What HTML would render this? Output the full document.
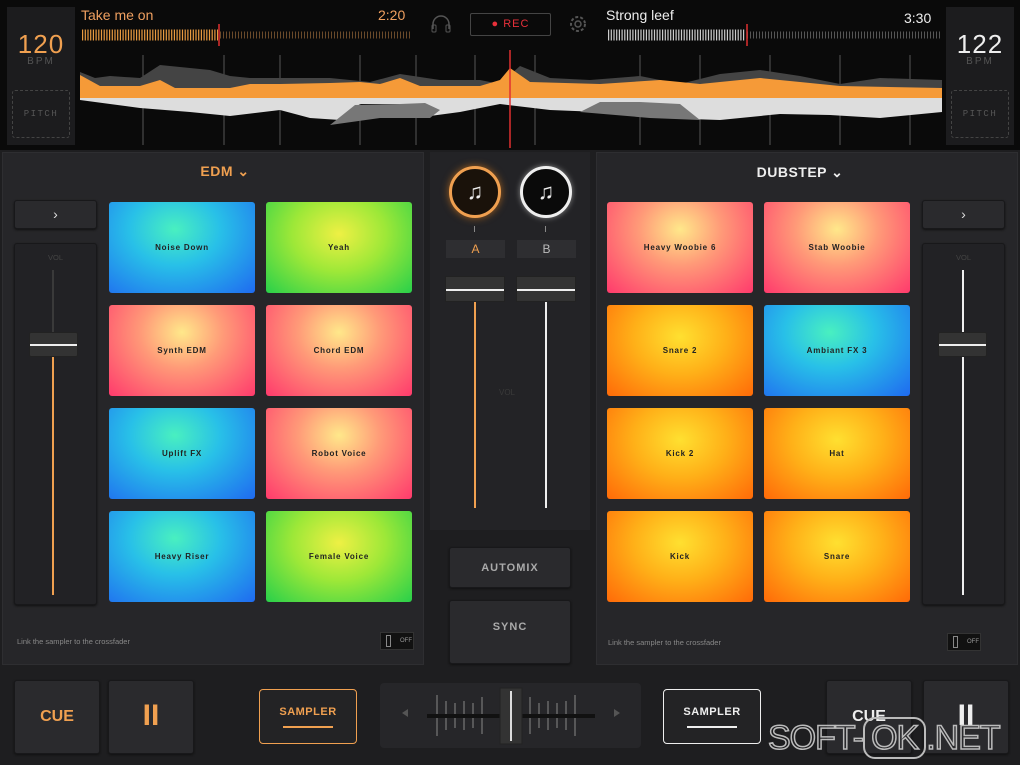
<!DOCTYPE html>
<html><head><meta charset="utf-8"><style>
*{margin:0;padding:0;box-sizing:border-box}
body{width:1020px;height:765px;background:#1e1e20;font-family:"Liberation Sans",sans-serif;position:relative;overflow:hidden;color:#ddd}
.a{position:absolute}
.panel{background:#262629;border:1px solid #2e2e31}
.btn{background:#2a2a2d;border:1px solid #18181a;border-radius:3px;box-shadow:0 1px 2px #111}
.pad{position:absolute;width:146px;height:91px;border-radius:3px;font-size:8px;font-weight:bold;letter-spacing:.8px;color:#222;display:flex;align-items:center;justify-content:center}
.blue{background:radial-gradient(ellipse at 45% 30%,#49f0c0 0%,#28c0e8 40%,#1f6af0 100%)}
.green{background:radial-gradient(ellipse at 50% 35%,#eef044 0%,#9ee838 45%,#28d04a 100%)}
.pink{background:radial-gradient(ellipse at 50% 30%,#ffe88a 0%,#ff9a78 40%,#ff3a6c 100%)}
.orange{background:radial-gradient(ellipse at 50% 35%,#ffe030 0%,#ffb018 45%,#ff6a08 100%)}
.hdr{font-size:14px;font-weight:bold;letter-spacing:.5px}
.small{font-size:7.5px;color:#888}
</style></head><body>
<div class="a" style="left:0;top:0;width:1020px;height:150px;background:#0a0a0a"></div>
<div class="a" style="top:7px;left:7px;width:68px;height:138px;background:#1c1c1e"></div>
<div class="a" style="left:7px;top:29px;width:68px;text-align:center;color:#f0a050;font-size:26px;letter-spacing:1px">120</div>
<div class="a" style="left:7px;top:56px;width:68px;text-align:center;color:#555;font-size:10px;letter-spacing:2px">BPM</div>
<div class="a" style="left:12px;top:90px;width:58px;height:48px;border:1px dashed #444;border-radius:3px;color:#555;font-size:9px;letter-spacing:1.5px;text-align:center;line-height:46px;font-family:'Liberation Mono',monospace">PITCH</div>
<div class="a" style="left:946px;top:7px;width:68px;height:138px;background:#1c1c1e"></div>
<div class="a" style="left:946px;top:29px;width:68px;text-align:center;color:#eee;font-size:26px;letter-spacing:1px">122</div>
<div class="a" style="left:946px;top:56px;width:68px;text-align:center;color:#555;font-size:10px;letter-spacing:2px">BPM</div>
<div class="a" style="left:951px;top:90px;width:58px;height:48px;border:1px dashed #444;border-radius:3px;color:#555;font-size:9px;letter-spacing:1.5px;text-align:center;line-height:46px;font-family:'Liberation Mono',monospace">PITCH</div>
<div class="a" style="left:81px;top:7px;color:#f0a060;font-size:14px">Take me on</div>
<div class="a" style="left:378px;top:7px;color:#f0a060;font-size:14px">2:20</div>
<div class="a" style="left:606px;top:7px;color:#eee;font-size:14px">Strong leef</div>
<div class="a" style="left:904px;top:10px;color:#eee;font-size:14px">3:30</div>
<div class="a" style="left:470px;top:13px;width:81px;height:23px;border:1px solid #444;border-radius:2px;color:#e8303a;font-size:11px;text-align:center;line-height:21px;letter-spacing:1px">● REC</div>
<svg class="a" style="left:430px;top:14px" width="22" height="20"><path d="M3 15 V10 a8 8 0 0 1 16 0 V15" fill="none" stroke="#555" stroke-width="1.5"/><rect x="2" y="11" width="4" height="7" rx="1" fill="none" stroke="#555"/><rect x="16" y="11" width="4" height="7" rx="1" fill="none" stroke="#555"/></svg>
<svg class="a" style="left:568px;top:14px" width="20" height="20"><circle cx="10" cy="10" r="7" fill="none" stroke="#555" stroke-width="2" stroke-dasharray="3 2"/><circle cx="10" cy="10" r="3" fill="none" stroke="#555" stroke-width="1.5"/></svg>
<svg class="a" style="left:80px;top:0" width="862" height="148">
<path d="M2 35 H138" stroke="#e89a40" stroke-width="11" stroke-dasharray="1.2 1.5"/>
<path d="M140 35 H330" stroke="#6a4a2a" stroke-width="7" stroke-dasharray="1 2"/>
<line x1="139" y1="24" x2="139" y2="46" stroke="#e03030" stroke-width="1.5"/>
<path d="M528 35 H665" stroke="#ccc" stroke-width="11" stroke-dasharray="1.2 1.5"/>
<path d="M667 35 H860" stroke="#555" stroke-width="7" stroke-dasharray="1 2"/>
<line x1="667" y1="24" x2="667" y2="46" stroke="#e03030" stroke-width="1.5"/>
<g stroke="#555" stroke-width="1">
<path d="M63 55V145M144 55V145M200 55V145M280 55V145M336 55V145M395 55V145M455 55V145M560 55V145M620 55V145M690 55V145M760 55V145M830 55V145"/>
</g>
<path d="M0 72 L15 78 30 76 60 78 80 65 110 68 130 70 150 76 170 78 200 78 250 78 290 82 320 74 360 80 400 80 420 84 440 66 470 78 510 80 560 76 600 84 640 74 680 70 720 76 760 84 800 78 862 80 V98 H0Z" fill="#444"/>
<path d="M0 75 L20 86 60 86 80 80 95 88 150 88 170 84 200 84 250 83 280 82 300 84 320 78 340 86 400 86 420 80 430 68 450 82 520 84 580 80 620 84 680 78 720 82 760 86 862 88 V98 H0Z" fill="#f59a38"/>
<path d="M0 98 H862 V112 L800 118 750 115 700 114 640 120 580 118 520 112 470 110 420 104 380 112 350 116 320 104 280 104 260 120 230 118 200 110 150 116 110 112 60 108 30 104 0 100Z" fill="#ddd"/>
<path d="M250 125 L275 105 320 104 345 103 360 110 350 118 300 118Z M500 112 L520 102 560 102 600 104 620 120 570 118Z" fill="#777"/>
<line x1="430" y1="50" x2="430" y2="148" stroke="#e03030" stroke-width="1.5"/>
</svg>
<div class="a panel" style="left:2px;top:152px;width:422px;height:513px"></div>
<div class="a hdr" style="left:180px;top:163px;width:90px;text-align:center;color:#f0a050">EDM ⌄</div>
<div class="a btn" style="left:14px;top:200px;width:83px;height:29px;text-align:center;line-height:27px;color:#ddd;font-size:14px">›</div>
<div class="a btn" style="left:14px;top:243px;width:83px;height:362px;background:#222225"></div>
<div class="a small" style="left:14px;top:253px;width:83px;text-align:center;color:#444">VOL</div>
<div class="a" style="left:52px;top:270px;width:2px;height:325px;background:#3a3a3a"></div>
<div class="a" style="left:52px;top:350px;width:2px;height:245px;background:#f0a050"></div>
<div class="a" style="left:29px;top:332px;width:49px;height:25px;background:#333;border:1px solid #222;border-radius:2px"><div style="margin-top:11px;height:2px;background:#eee"></div></div>
<div class="pad blue" style="left:109px;top:202px">Noise Down</div>
<div class="pad green" style="left:266px;top:202px">Yeah</div>
<div class="pad pink" style="left:109px;top:305px">Synth EDM</div>
<div class="pad pink" style="left:266px;top:305px">Chord EDM</div>
<div class="pad blue" style="left:109px;top:408px">Uplift FX</div>
<div class="pad pink" style="left:266px;top:408px">Robot Voice</div>
<div class="pad blue" style="left:109px;top:511px">Heavy Riser</div>
<div class="pad green" style="left:266px;top:511px">Female Voice</div>
<div class="a small" style="left:17px;top:637px">Link the sampler to the crossfader</div>
<div class="a" style="left:380px;top:632px;width:34px;height:18px;background:#111;border:1px solid #333;font-size:6px;color:#999;line-height:16px;padding-left:19px">OFF<div style="position:absolute;left:5px;top:2px;width:5px;height:12px;border:1px solid #888"></div></div>
<div class="a" style="left:430px;top:152px;width:160px;height:378px;background:#232326"></div>
<div class="a" style="left:449px;top:166px;width:52px;height:52px;border-radius:50%;border:3px solid #f0a050;background:#1a120a;box-shadow:0 0 8px #a06020;color:#eee;font-size:22px;text-align:center;line-height:46px">♫</div>
<div class="a" style="left:520px;top:166px;width:52px;height:52px;border-radius:50%;border:3px solid #eee;background:#0a0a0a;box-shadow:0 0 6px #888;color:#eee;font-size:22px;text-align:center;line-height:46px">♫</div>
<div class="a" style="left:474px;top:226px;width:1px;height:6px;background:#888"></div>
<div class="a" style="left:545px;top:226px;width:1px;height:6px;background:#888"></div>
<div class="a" style="left:446px;top:240px;width:59px;height:18px;background:#2e2e31;color:#f0a050;font-size:12px;text-align:center;line-height:18px">A</div>
<div class="a" style="left:517px;top:240px;width:59px;height:18px;background:#2e2e31;color:#bbb;font-size:12px;text-align:center;line-height:18px">B</div>
<div class="a" style="left:474px;top:300px;width:2px;height:208px;background:#f0a050"></div>
<div class="a" style="left:545px;top:300px;width:2px;height:208px;background:#eee"></div>
<div class="a" style="left:499px;top:388px;color:#3a3a3a;font-size:8px">VOL</div>
<div class="a" style="left:445px;top:276px;width:60px;height:26px;background:#333;border:1px solid #222"><div style="margin-top:12px;height:2px;background:#eee"></div></div>
<div class="a" style="left:516px;top:276px;width:60px;height:26px;background:#333;border:1px solid #222"><div style="margin-top:12px;height:2px;background:#eee"></div></div>
<div class="a btn" style="left:449px;top:547px;width:122px;height:41px;text-align:center;line-height:40px;font-size:11px;font-weight:bold;letter-spacing:1px;color:#aaa">AUTOMIX</div>
<div class="a btn" style="left:449px;top:600px;width:122px;height:64px;text-align:center;padding-top:20px;font-size:11px;font-weight:bold;letter-spacing:1px;color:#aaa">SYNC</div>
<div class="a panel" style="left:596px;top:152px;width:422px;height:513px"></div>
<div class="a hdr" style="left:740px;top:164px;width:120px;text-align:center;color:#eee">DUBSTEP ⌄</div>
<div class="a btn" style="left:922px;top:200px;width:83px;height:29px;text-align:center;line-height:27px;color:#ddd;font-size:14px">›</div>
<div class="a btn" style="left:922px;top:243px;width:83px;height:362px;background:#222225"></div>
<div class="a small" style="left:922px;top:253px;width:83px;text-align:center;color:#444">VOL</div>
<div class="a" style="left:962px;top:270px;width:2px;height:325px;background:#eee"></div>
<div class="a" style="left:938px;top:332px;width:49px;height:25px;background:#333;border:1px solid #222;border-radius:2px"><div style="margin-top:11px;height:2px;background:#eee"></div></div>
<div class="pad pink" style="left:607px;top:202px">Heavy Woobie 6</div>
<div class="pad pink" style="left:764px;top:202px">Stab Woobie</div>
<div class="pad orange" style="left:607px;top:305px">Snare 2</div>
<div class="pad blue" style="left:764px;top:305px">Ambiant FX 3</div>
<div class="pad orange" style="left:607px;top:408px">Kick 2</div>
<div class="pad orange" style="left:764px;top:408px">Hat</div>
<div class="pad orange" style="left:607px;top:511px">Kick</div>
<div class="pad orange" style="left:764px;top:511px">Snare</div>
<div class="a small" style="left:608px;top:638px">Link the sampler to the crossfader</div>
<div class="a" style="left:947px;top:633px;width:34px;height:18px;background:#111;border:1px solid #333;font-size:6px;color:#999;line-height:16px;padding-left:19px">OFF<div style="position:absolute;left:5px;top:2px;width:5px;height:12px;border:1px solid #888"></div></div>
<div class="a btn" style="left:14px;top:680px;width:86px;height:74px;color:#f0a050;font-size:16px;font-weight:bold;text-align:center;line-height:72px">CUE</div>
<div class="a btn" style="left:108px;top:680px;width:86px;height:74px;color:#f0a050;font-size:30px;font-weight:bold;text-align:center;line-height:70px">II</div>
<div class="a" style="left:259px;top:689px;width:98px;height:55px;border:1.5px solid #f0a050;border-radius:4px;background:#232325;color:#f0a050;font-size:11px;font-weight:bold;letter-spacing:.5px;text-align:center;padding-top:16px">SAMPLER<div style="margin:8px auto 0;width:50px;height:2px;background:#f0a050"></div></div>
<div class="a" style="left:663px;top:689px;width:98px;height:55px;border:1.5px solid #eee;border-radius:4px;background:#232325;color:#eee;font-size:11px;font-weight:bold;letter-spacing:.5px;text-align:center;padding-top:16px">SAMPLER<div style="margin:8px auto 0;width:50px;height:2px;background:#eee"></div></div>
<div class="a" style="left:380px;top:683px;width:261px;height:65px;background:#262629;border-radius:4px"></div>
<svg class="a" style="left:380px;top:683px" width="261" height="65">
<path d="M22 30 l6 -4 v8z M240 30 l-6 -4 v8z" fill="#555"/>
<g stroke="#888"><path d="M57 12V53M66 18V47M75 20V45M84 18V47M93 20V45M102 14V51M150 14V51M159 20V45M168 18V47M177 20V45M186 18V47M195 12V53"/></g>
<line x1="47" y1="33" x2="215" y2="33" stroke="#111" stroke-width="4"/>
<rect x="120" y="5" width="22" height="56" fill="#333" stroke="#222"/>
<line x1="131" y1="8" x2="131" y2="58" stroke="#ddd" stroke-width="2"/>
</svg>
<div class="a btn" style="left:826px;top:680px;width:86px;height:74px;color:#eee;font-size:16px;font-weight:bold;text-align:center;line-height:72px">CUE</div>
<div class="a btn" style="left:923px;top:680px;width:86px;height:74px;color:#eee;font-size:30px;font-weight:bold;text-align:center;line-height:70px">II</div>
<div class="a" style="left:768px;top:719px;font-size:34px;color:transparent;-webkit-text-stroke:1.5px #bbb;letter-spacing:-1px">SOFT-<span style="border:2px solid #bbb;border-radius:12px;padding:0 6px">OK</span>.NET</div>
</body></html>
